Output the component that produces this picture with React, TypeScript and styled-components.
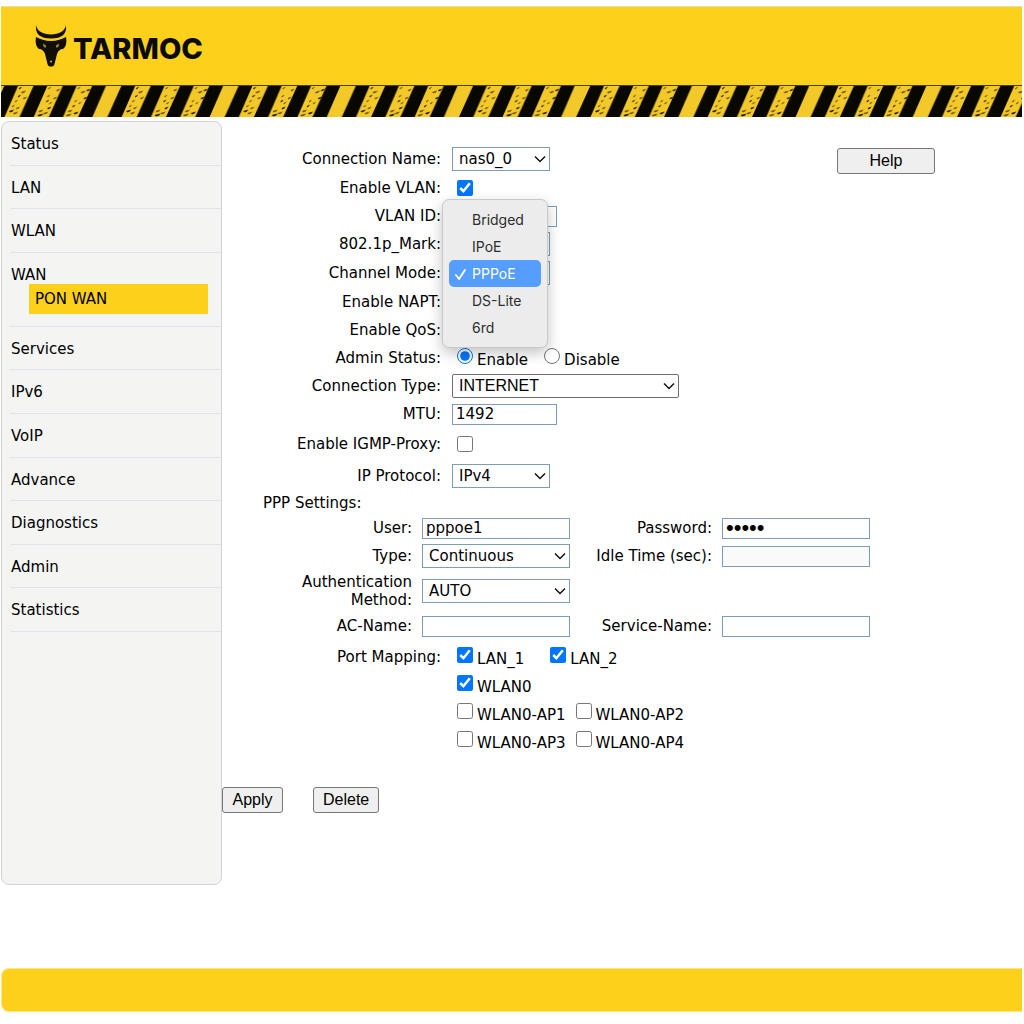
import React, { useState } from "react";
import styled, { createGlobalStyle, css } from "styled-components";

const yellow = "#fcd01b";
const fieldBorder = "#7f9db9";
const bodyFont = `Verdana, "DejaVu Sans", sans-serif`;
const controlFont = `Arial, "Liberation Sans", sans-serif`;

const GlobalStyle = createGlobalStyle`
  *, *::before, *::after { box-sizing: border-box; }
  body {
    margin: 0;
    background: #fff;
    color: #000;
    font: 15px/18px ${bodyFont};
  }
`;

const Page = styled.div`
  display: flex;
  flex-direction: column;
  padding: 6px 2px 12px 1px;
`;

const Banner = styled.header`
  background: ${yellow};
  border-top: 1px solid #dfe3a4;
`;

const Brand = styled.div`
  display: flex;
  align-items: center;
  gap: 6px;
  height: 78px;
  padding-left: 34px;
`;

const BullMark = styled.svg`
  width: 32px;
  height: 42px;
`;

const Wordmark = styled.span`
  padding-top: 6px;
  font: 800 29px/40px Inter, sans-serif;
  color: #0b0a05;
`;

const StripeBand = styled.svg`
  display: block;
  width: 100%;
  height: 32px;
  border-top: 1px solid #4a3d08;
`;

const Columns = styled.div`
  display: flex;
  align-items: flex-start;
  margin-top: 4px;
`;

const Sidebar = styled.nav`
  flex: none;
  width: 221px;
  min-height: 764px;
  padding-left: 8px;
  background: #f4f4f3;
  border: 1px solid #d2d3d4;
  border-radius: 8px;
`;

const Menu = styled.ul`
  display: flex;
  flex-direction: column;
  height: 510px;
  margin: 0;
  padding: 0;
  list-style: none;
`;

const MenuItem = styled.li<{ $open?: boolean }>`
  display: flex;
  flex-direction: column;
  flex: ${(p) => (p.$open ? "0 0 74px" : "1 1 0")};
  padding: 13px 0 0 1px;
  border-bottom: 1px solid #dfe4e8;
`;

const MenuLink = styled.a`
  color: #000;
  text-decoration: none;
`;

const SubLink = styled(MenuLink)`
  margin: 0 13px 0 18px;
  padding: 6px;
  background: ${yellow};
`;

const Main = styled.main`
  flex: 1;
  min-width: 0;
  padding-top: 23px;
`;

const FormArea = styled.div`
  display: flex;
  padding: 0 87px 0 41px;
`;

const Fields = styled.div`
  flex: 1;
  min-width: 0;
`;

const Row = styled.div<{ $height?: number }>`
  display: grid;
  grid-template-columns: 178px 1fr;
  column-gap: 11px;
  align-items: center;
  height: ${(p) => p.$height ?? 28}px;
`;

const labelText = css`
  text-align: right;
  white-space: nowrap;
`;

const Label = styled.label`
  ${labelText}
`;

const Caption = styled.span`
  ${labelText}
`;

const WrappingLabel = styled.label`
  text-align: right;
`;

const SectionTitle = styled.div`
  line-height: 22px;
`;

const PppGrid = styled.div`
  display: grid;
  grid-template-columns: 149px 148px 132px 148px;
  grid-template-rows: 28px 28px 42px 28px;
  column-gap: 10px;
  align-items: center;
`;

const PortMapping = styled.div`
  margin: 3px 0 32px;
`;

const Control = styled.div`
  position: relative;
  display: flex;
  align-items: center;
`;

const TextInput = styled.input<{ $width?: string }>`
  width: ${(p) => p.$width ?? "100%"};
  height: 21px;
  padding: 1px 3px;
  border: 1px solid ${fieldBorder};
  border-radius: 0;
  background: #fff;
  color: #000;
  font: 15px/17px ${bodyFont};
  &:disabled { background: #fafafa; }
  &[type="password"] { font: 22px/17px ${controlFont}; }
`;

const SelectBox = styled.div<{ $width?: string }>`
  display: grid;
  align-items: center;
  width: ${(p) => p.$width ?? "100%"};
`;

const NativeSelect = styled.select<{ $plain?: boolean }>`
  grid-area: 1 / 1;
  appearance: none;
  width: 100%;
  height: 24px;
  padding: 0 20px 0 6px;
  border: 1px solid ${(p) => (p.$plain ? "#6f6f6f" : fieldBorder)};
  border-radius: ${(p) => (p.$plain ? 2 : 0)}px;
  background: #fff;
  color: #000;
  font: ${(p) => (p.$plain ? `16px/20px ${controlFont}` : `15px/20px ${bodyFont}`)};
`;

const Chevron = styled.svg`
  grid-area: 1 / 1;
  justify-self: end;
  width: 12px;
  height: 8px;
  margin-right: 4px;
  pointer-events: none;
`;

const Choices = styled.div<{ $gap?: number }>`
  display: flex;
  gap: ${(p) => p.$gap ?? 10}px;
  padding-left: 5px;
`;

const ChoiceLabel = styled.label`
  display: flex;
  align-items: flex-start;
  gap: 4px;
  white-space: nowrap;
`;

const ChoiceText = styled.span`
  padding-top: 3px;
`;

const Tick = styled.input`
  flex: none;
  width: 16px;
  height: 16px;
  margin: 0;
  accent-color: #0075ff;
`;

const Popup = styled.ul`
  position: absolute;
  z-index: 2;
  top: -62px;
  left: -10px;
  width: 106px;
  margin: 0;
  padding: 6px;
  list-style: none;
  background: #ececec;
  border: 1px solid #c9c9c9;
  border-radius: 7px;
  box-shadow: 0 5px 14px rgba(0, 0, 0, 0.24);
`;

const PopupOption = styled.li<{ $active: boolean }>`
  display: grid;
  grid-template-columns: 13px 1fr;
  column-gap: 5px;
  align-items: center;
  height: 27px;
  padding-left: 5px;
  border-radius: 5px;
  background: ${(p) => (p.$active ? "#559dff" : "transparent")};
  color: ${(p) => (p.$active ? "#fff" : "#2c2c2c")};
  font: 14px/20px Inter, sans-serif;
  cursor: default;
`;

const OptionName = styled.span`
  grid-column: 2;
`;

const CheckMark = styled.svg`
  grid-column: 1;
  width: 13px;
  height: 14px;
`;

const Button = styled.button<{ $wide?: boolean }>`
  height: 26px;
  min-width: ${(p) => (p.$wide ? 98 : 61)}px;
  padding: 0 9px;
  border: 1px solid #767676;
  border-radius: 3px;
  background: #efefef;
  color: #000;
  font: 16px/22px ${controlFont};
`;

const HelpSlot = styled.div`
  flex: none;
  padding-top: 4px;
`;

const Actions = styled.div`
  display: flex;
  gap: 30px;
`;

const Footer = styled.footer`
  height: 44px;
  margin-top: 83px;
  background: ${yellow};
  border: 1px solid #ffe680;
  border-right: 0;
  border-radius: 8px 0 0 8px;
`;

const specks = [
  [18, 2, 3], [25, 4, 4], [20, 6, 5], [17, 10, 3], [22, 12, 4], [14, 15, 3],
  [19, 17, 3], [11, 20, 3], [15, 22, 4], [8, 25, 5], [12, 27, 5], [5, 29, 6],
];

function HazardStripes() {
  return (
    <StripeBand aria-hidden="true">
      <defs>
        <pattern id="hazard" width="29.3" height="31" patternUnits="userSpaceOnUse">
          <rect width="30" height="31" fill="#080702" />
          <path d="M17 0H32.5L18.5 31H3.5Z" fill="#f3c929" />
          <path d="M-12.3 0H3.2L-10.8 31H-25.8Z" fill="#f3c929" />
        </pattern>
        <pattern id="grit" width="117.2" height="31" patternUnits="userSpaceOnUse">
          {[0, 1, 2].map((band) =>
            specks.map(([x, y, w], i) =>
              (i * 3 + band * 2) % 5 === 3 ? null : (
                <path
                  key={`${band}-${i}`}
                  d={`M${x + 29.3 * band + ((i * band) % 3)} ${y}l${w} -1.6l-1.4 2l-${w / 2} 1z`}
                  fill={(i + band) % 3 ? "#6d560c" : "#1c1603"}
                />
              )
            )
          )}
        </pattern>
      </defs>
      <rect width="100%" height="31" fill="url(#hazard)" />
      <rect width="100%" height="31" fill="url(#grit)" />
    </StripeBand>
  );
}

function Bull() {
  return (
    <BullMark viewBox="0 0 32 42" aria-hidden="true">
      <g fill="#100e05">
        <path d="M1 0C2 6 8 9.500 16 9.500S30 6 31 0C32 9 27 13.500 16 13.500S0 9 1 0Z" />
        <path d="M1 12C5 14 10 16 16 16S27 14 31 12C32 17 31 22 28 24C25 24 23 26 22 29L19.500 39C19 41 18 41.500 16 41.500S13 41 12.500 39L10 29C9 26 7 24 4 24C1 22 0 17 1 12Z" />
      </g>
      <path d="M8 18.500L11 20.500L10.500 23L8.500 21.500ZM24 18.500L21 20.500L21.500 23L23.500 21.500Z" fill="#a5913a" />
      <circle cx="16" cy="36.500" r="1" fill="#d9bd3c" />
    </BullMark>
  );
}

interface SelectProps {
  id: string;
  options: string[];
  width?: string;
  plain?: boolean;
}

function Select({ id, options, width, plain }: SelectProps) {
  return (
    <SelectBox $width={width}>
      <NativeSelect id={id} defaultValue={options[0]} $plain={plain}>
        {options.map((o) => (
          <option key={o}>{o}</option>
        ))}
      </NativeSelect>
      <Chevron viewBox="0 0 12 8" aria-hidden="true">
        <path d="M1 1.500L6 6.500L11 1.500" fill="none" stroke="#111" strokeWidth="1.5" />
      </Chevron>
    </SelectBox>
  );
}

interface ChoiceProps {
  name: string;
  type?: "checkbox" | "radio";
  group?: string;
  checked?: boolean;
}

function Choice({ name, type = "checkbox", group, checked }: ChoiceProps) {
  return (
    <ChoiceLabel>
      <Tick type={type} name={group} defaultChecked={checked} />
      <ChoiceText>{name}</ChoiceText>
    </ChoiceLabel>
  );
}

const modes = ["Bridged", "IPoE", "PPPoE", "DS-Lite", "6rd"];

function ChannelMode() {
  const [mode, setMode] = useState("PPPoE");
  return (
    <Control>
      <SelectBox $width="98px">
        <NativeSelect id="mode" value={mode} onChange={(e) => setMode(e.target.value)}>
          {modes.map((m) => (
            <option key={m}>{m}</option>
          ))}
        </NativeSelect>
      </SelectBox>
      <Popup role="listbox" aria-label="Channel Mode">
        {modes.map((m) => (
          <PopupOption
            key={m}
            role="option"
            aria-selected={m === mode}
            $active={m === mode}
            onClick={() => setMode(m)}
          >
            {m === mode && (
              <CheckMark viewBox="0 0 13 14" aria-hidden="true">
                <path
                  d="M2 8L5 12L11 3"
                  fill="none"
                  stroke="#fff"
                  strokeWidth="1.9"
                  strokeLinecap="round"
                  strokeLinejoin="round"
                />
              </CheckMark>
            )}
            <OptionName>{m}</OptionName>
          </PopupOption>
        ))}
      </Popup>
    </Control>
  );
}

const menu = [
  "Status", "LAN", "WLAN", "WAN", "Services", "IPv6",
  "VoIP", "Advance", "Diagnostics", "Admin", "Statistics",
];

export default function App() {
  return (
    <Page>
      <GlobalStyle />
      <Banner>
        <Brand>
          <Bull />
          <Wordmark>TARMOC</Wordmark>
        </Brand>
        <HazardStripes />
      </Banner>
      <Columns>
        <Sidebar>
          <Menu>
            {menu.map((item) => (
              <MenuItem key={item} $open={item === "WAN"}>
                <MenuLink href="#">{item}</MenuLink>
                {item === "WAN" && <SubLink href="#">PON WAN</SubLink>}
              </MenuItem>
            ))}
          </Menu>
        </Sidebar>
        <Main>
          <FormArea>
            <Fields>
              <Row $height={30}>
                <Label htmlFor="conn">Connection Name:</Label>
                <Select id="conn" options={["nas0_0"]} width="98px" />
              </Row>
              <Row>
                <Label htmlFor="vlan">Enable VLAN:</Label>
                <Choices><Tick id="vlan" type="checkbox" defaultChecked /></Choices>
              </Row>
              <Row>
                <Label htmlFor="vid">VLAN ID:</Label>
                <TextInput id="vid" $width="105px" />
              </Row>
              <Row>
                <Label htmlFor="mark">802.1p_Mark:</Label>
                <Select id="mark" options={[""]} width="98px" />
              </Row>
              <Row $height={30}>
                <Label htmlFor="mode">Channel Mode:</Label>
                <ChannelMode />
              </Row>
              <Row>
                <Label htmlFor="napt">Enable NAPT:</Label>
                <Choices><Tick id="napt" type="checkbox" defaultChecked /></Choices>
              </Row>
              <Row>
                <Label htmlFor="qos">Enable QoS:</Label>
                <Choices><Tick id="qos" type="checkbox" /></Choices>
              </Row>
              <Row>
                <Caption>Admin Status:</Caption>
                <Choices $gap={16}>
                  <Choice type="radio" group="admin" name="Enable" checked />
                  <Choice type="radio" group="admin" name="Disable" />
                </Choices>
              </Row>
              <Row>
                <Label htmlFor="ctype">Connection Type:</Label>
                <Select id="ctype" options={["INTERNET"]} width="227px" plain />
              </Row>
              <Row>
                <Label htmlFor="mtu">MTU:</Label>
                <TextInput id="mtu" defaultValue="1492" $width="105px" />
              </Row>
              <Row $height={32}>
                <Label htmlFor="igmp">Enable IGMP-Proxy:</Label>
                <Choices><Tick id="igmp" type="checkbox" /></Choices>
              </Row>
              <Row $height={32}>
                <Label htmlFor="proto">IP Protocol:</Label>
                <Select id="proto" options={["IPv4"]} width="98px" />
              </Row>
              <SectionTitle>PPP Settings:</SectionTitle>
              <PppGrid>
                <Label htmlFor="user">User:</Label>
                <TextInput id="user" defaultValue="pppoe1" />
                <Label htmlFor="pass">Password:</Label>
                <TextInput id="pass" type="password" defaultValue="pppoe" />
                <Label htmlFor="ptype">Type:</Label>
                <Select id="ptype" options={["Continuous"]} />
                <Label htmlFor="idle">Idle Time (sec):</Label>
                <TextInput id="idle" disabled />
                <WrappingLabel htmlFor="auth">Authentication Method:</WrappingLabel>
                <Select id="auth" options={["AUTO"]} />
                <span />
                <span />
                <Label htmlFor="ac">AC-Name:</Label>
                <TextInput id="ac" />
                <Label htmlFor="service">Service-Name:</Label>
                <TextInput id="service" />
              </PppGrid>
              <PortMapping>
                <Row>
                  <Caption>Port Mapping:</Caption>
                  <Choices $gap={26}>
                    <Choice name="LAN_1" checked />
                    <Choice name="LAN_2" checked />
                  </Choices>
                </Row>
                <Row>
                  <span />
                  <Choices><Choice name="WLAN0" checked /></Choices>
                </Row>
                <Row>
                  <span />
                  <Choices>
                    <Choice name="WLAN0-AP1" />
                    <Choice name="WLAN0-AP2" />
                  </Choices>
                </Row>
                <Row>
                  <span />
                  <Choices>
                    <Choice name="WLAN0-AP3" />
                    <Choice name="WLAN0-AP4" />
                  </Choices>
                </Row>
              </PortMapping>
            </Fields>
            <HelpSlot>
              <Button type="button" $wide>Help</Button>
            </HelpSlot>
          </FormArea>
          <Actions>
            <Button type="button">Apply</Button>
            <Button type="button">Delete</Button>
          </Actions>
        </Main>
      </Columns>
      <Footer />
    </Page>
  );
}
